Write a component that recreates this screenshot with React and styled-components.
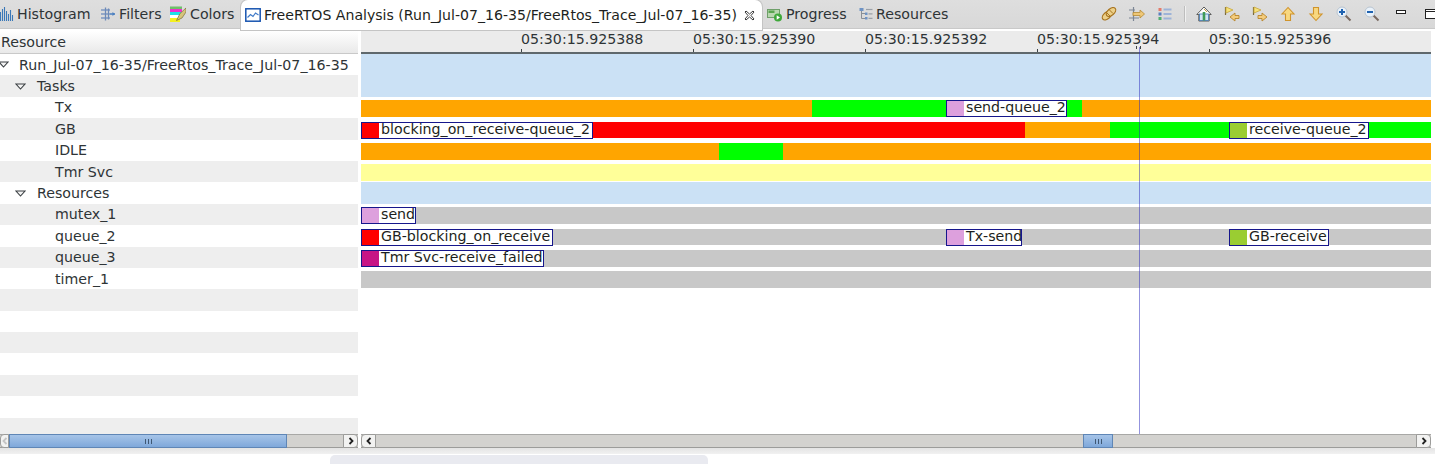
import React from 'react';
import styled, { createGlobalStyle } from 'styled-components';

const GlobalStyle = createGlobalStyle`
    html, body { margin: 0; padding: 0; background: #fff; }
    body { font-family: "DejaVu Sans", sans-serif; font-size: 14.2px; color: #2e3436; }
`;

const ROW_H = 21.4;
const ORANGE = '#ffa500';
const GREEN = '#00ff00';
const RED = '#ff0000';
const GRAY = '#c8c8c8';
const BLUE = '#cbe1f5';
const YELLOW = '#ffff99';
const PLUM = '#dda0dd';
const LIME = '#9acd32';
const VIOLET = '#c71585';

const tree = [
    { name: 'Run_Jul-07_16-35/FreeRtos_Trace_Jul-07_16-35', level: 0, open: true },
    { name: 'Tasks', level: 1, open: true },
    { name: 'Tx', level: 2 },
    { name: 'GB', level: 2 },
    { name: 'IDLE', level: 2 },
    { name: 'Tmr Svc', level: 2 },
    { name: 'Resources', level: 1, open: true },
    { name: 'mutex_1', level: 2 },
    { name: 'queue_2', level: 2 },
    { name: 'queue_3', level: 2 },
    { name: 'timer_1', level: 2 },
];

// each track is a list of [width, colour] states, or [width, colour, label] for a labelled event
const tracks = [
    { group: true, rows: 2 },
    { states: [[451, ORANGE], [134, GREEN], [121, PLUM, 'send-queue_2'], [15, GREEN], [349, ORANGE]] },
    { states: [[232, RED, 'blocking_on_receive-queue_2'], [432, RED], [85, ORANGE], [119, GREEN], [140, LIME, 'receive-queue_2'], [62, GREEN]] },
    { states: [[358, ORANGE], [64, GREEN], [648, ORANGE]] },
    { states: [[1070, YELLOW]] },
    { group: true, rows: 1 },
    { states: [[55, PLUM, 'send'], [1015, GRAY]] },
    { states: [[192, RED, 'GB-blocking_on_receive'], [393, GRAY], [76, PLUM, 'Tx-send'], [207, GRAY], [100, LIME, 'GB-receive'], [102, GRAY]] },
    { states: [[183, VIOLET, 'Tmr Svc-receive_failed'], [887, GRAY]] },
    { states: [[1070, GRAY]] },
];

const ticks = ['05:30:15.925388', '05:30:15.925390', '05:30:15.925392', '05:30:15.925394', '05:30:15.925396'];

const Page = styled.div`
    position: relative;
    width: 1435px;
    height: 464px;
    overflow: hidden;
    background: #fff;
`;

const TabBar = styled.div`
    display: flex;
    align-items: stretch;
    height: 29px;
    box-sizing: border-box;
    background: linear-gradient(#dedede, #d8d8d8);
    border-bottom: 1px solid #c9c9c9;
`;

const Tab = styled.div`
    display: flex;
    align-items: center;
    flex: 0 0 ${p => p.$w}px;
    box-sizing: border-box;
    padding-left: ${p => p.$pad}px;
    gap: ${p => p.$gap}px;
    height: ${p => (p.$active ? '30px' : '28px')};
    font-size: ${p => (p.$active ? '14.1px' : '14.2px')};
    white-space: nowrap;
    color: ${p => (p.$active ? '#1d1f20' : '#2e3436')};
    background: ${p => (p.$active ? '#fff' : 'transparent')};
    border-radius: ${p => (p.$active ? '7px 7px 0 0' : '0')};
    box-shadow: ${p => (p.$active ? '0 0 0 1px #c4c4c4' : 'none')};
    position: relative;
`;

const CloseSlot = styled.span`
    display: flex;
    margin-left: 4px;
`;

const Toolbar = styled.div`
    display: flex;
    align-items: center;
    margin-left: auto;
    margin-right: -11px;
    height: 28px;
`;

const ToolSlot = styled.div`
    display: flex;
    justify-content: center;
    align-items: center;
    width: 28px;
    height: 28px;
    margin-left: ${p => p.$push || 0}px;
`;

const ToolSep = styled.div`
    width: 1px;
    height: 16px;
    margin: 0 5px 0 5px;
    background: #bdbdbd;
    box-shadow: 1px 0 0 #f1f1f1;
`;

const Panes = styled.div`
    display: grid;
    grid-template-columns: 358px 1070px;
    column-gap: 3px;
    margin-top: 2px;
    height: 403px;
    overflow: hidden;
`;

const TreePane = styled.div`
    overflow: hidden;
`;

const TreeHeader = styled.div`
    display: flex;
    align-items: center;
    height: 23px;
    box-sizing: border-box;
    padding-left: 1px;
    background: linear-gradient(#ffffff, #e9e9e9);
    border-bottom: 1px solid #c9c9c9;
`;

const TreeRow = styled.div`
    display: flex;
    align-items: center;
    height: ${ROW_H}px;
    padding-left: ${p => [0, 15, 55][p.$level]}px;
    background: ${p => (p.$odd ? '#eeeeee' : '#ffffff')};
    white-space: nowrap;
`;

const Twisty = styled.svg`
    width: 11px;
    height: 7px;
    margin-right: ${p => (p.$root ? '10px' : '11px')};
    margin-left: ${p => (p.$root ? '-2px' : '0')};
`;

const ChartPane = styled.div`
    position: relative;
    overflow: hidden;
`;

const Ruler = styled.div`
    display: flex;
    height: 23px;
    box-sizing: border-box;
    padding-left: 160px;
    background: #ebebeb;
    border-bottom: 2px solid #5f686c;
`;

const Tick = styled.div`
    position: relative;
    flex: 0 0 172px;
    line-height: 17px;
    white-space: nowrap;

    &::after {
        content: '';
        position: absolute;
        left: 0;
        bottom: 0;
        width: 1px;
        height: 3px;
        background: #3d4447;
    }
`;

const Track = styled.div`
    display: flex;
    box-sizing: border-box;
    height: ${p => p.$rows * ROW_H}px;
    padding-top: ${p => (p.$group ? 0 : 3.5)}px;
`;

const GroupBand = styled.div`
    flex: 1;
    background: ${BLUE};
`;

const State = styled.div`
    flex: 0 0 ${p => p.$w}px;
    height: 16.5px;
    background: ${p => p.$c};
`;

const Event = styled.div`
    display: flex;
    flex: 0 0 ${p => p.$w}px;
    box-sizing: border-box;
    height: 17px;
    border: 1px solid #16168c;
    background: #fff;
    overflow: hidden;
`;

const Swatch = styled.div`
    flex: 0 0 17px;
    background: ${p => p.$c};
`;

const EventLabel = styled.span`
    padding-left: 2px;
    line-height: 13px;
    color: #1d1f20;
    white-space: nowrap;
`;

const Cursor = styled.div`
    position: absolute;
    left: 778px;
    top: 16px;
    bottom: 0;
    width: 1px;
    background: rgba(40, 40, 190, 0.5);
`;

const CursorMark = styled.div`
    position: absolute;
    left: 775px;
    top: 15px;
    width: 3px;
    height: 3px;
    border-left: 1px solid #3d4447;
    border-right: 1px solid #3d4447;
`;

const Scrollers = styled.div`
    display: grid;
    grid-template-columns: 358px 1070px;
    column-gap: 3px;
    height: 14px;
`;

const Scroller = styled.div`
    display: flex;
    box-sizing: border-box;
    height: 14px;
    background: #d3d2cf;
    border-top: 1px solid #a8a8a6;
    border-bottom: 1px solid #9c9c9a;
`;

const ScrollButton = styled.div`
    display: flex;
    align-items: center;
    justify-content: center;
    flex: 0 0 ${p => p.$w || 15}px;
    box-sizing: border-box;
    margin: -1px 0;
    background: #f2f2f1;
    border: 1px solid #9c9c9a;
    border-radius: ${p => (p.$left ? '4px 0 0 4px' : '0 4px 4px 0')};
`;

const Gutter = styled.div`
    flex: 0 0 ${p => p.$w}px;
`;

const Thumb = styled.div`
    display: flex;
    align-items: center;
    justify-content: center;
    gap: 2px;
    flex: 0 0 ${p => p.$w}px;
    box-sizing: border-box;
    margin: -1px 0;
    background: linear-gradient(#a6c4e8, #7fa8da);
    border: 1px solid #5f86b6;
`;

const Grip = styled.span`
    width: 1px;
    height: 5px;
    background: #3f5874;
`;

const BottomEdge = styled.div`
    height: 6px;
    background: linear-gradient(#e4e4e4, #f1f1f1);
`;

const BottomTab = styled.div`
    width: 378px;
    height: 12px;
    margin: 1px 0 0 330px;
    background: #e9eaf0;
    border-radius: 5px 5px 0 0;
`;

const Icon = ({ children, w = 16, h = 16 }) => (
    <svg width={w} height={h} viewBox={`0 0 ${w} ${h}`} style={{ flex: 'none', display: 'block' }}>
        {children}
    </svg>
);

const HistogramIcon = () => (
    <Icon w={14} h={14}>
        <path d="M0.500 5v9M2.500 2v12M4.500 0v14M6.500 4v10M8.500 7v7M10.500 3v11M12.500 8v6" stroke="#3a78b8" strokeWidth="1.100" fill="none" />
    </Icon>
);

const FiltersIcon = () => (
    <Icon>
        <path d="M1 4h9M1 8h9M1 12h9" stroke="#7d98c2" strokeWidth="1.300" />
        <path d="M5.500 1.500v13M8.500 2.500v11" stroke="#6d8ab8" strokeWidth="1.300" />
        <path d="M10 8h5" stroke="#4a7fc0" strokeWidth="1.500" />
        <path d="M12.500 6l2.500 2-2.500 2z" fill="#4a7fc0" />
    </Icon>
);

const ColorsIcon = () => (
    <Icon h={17}>
        <rect x="0" y="0.500" width="12" height="2.500" fill="#6fbf6a" />
        <rect x="0" y="3" width="12" height="3" fill="#f02fd0" />
        <rect x="0" y="6" width="12" height="3" fill="#20e0e8" />
        <rect x="0" y="9" width="12" height="3" fill="#ffffff" />
        <rect x="0" y="12" width="10" height="4" fill="#f4f020" />
        <path d="M16 2l-6 5.500-3.500 7 5.500-2.500 4-6z" fill="#d6c47a" stroke="#7d6d3a" strokeWidth="0.700" />
    </Icon>
);

const AnalysisIcon = () => (
    <Icon>
        <rect x="0.800" y="1.800" width="14.400" height="12.400" fill="#fff" stroke="#1854b0" strokeWidth="1.500" />
        <path d="M2.500 10.500l3-3 2.500 2 2.500-3.500 3 2" fill="none" stroke="#3f7ac8" strokeWidth="1.200" />
    </Icon>
);

const CloseIcon = () => (
    <Icon w={11} h={11}>
        <path d="M1 2l1-1 3.500 3 3.500-3 1 1-3 3.500 3 3.500-1 1-3.500-3-3.500 3-1-1 3-3.500z" fill="#fff" stroke="#3b3b3b" strokeWidth="1" />
    </Icon>
);

const ProgressIcon = () => (
    <Icon>
        <rect x="0.500" y="3.500" width="12" height="8" fill="#b9d7b0" stroke="#6f9f6a" />
        <rect x="1.500" y="4.500" width="6" height="2.500" fill="#5aa550" />
        <circle cx="11" cy="11.500" r="4" fill="#3ea83a" />
        <path d="M9.700 9.300l3.300 2.200-3.300 2.200z" fill="#fff" />
    </Icon>
);

const ResourcesIcon = () => (
    <Icon w={14} h={14}>
        <path d="M2.500 3v8.500H6M2.500 6.500H6" fill="none" stroke="#8a8f96" />
        <rect x="0.500" y="1" width="4" height="3" fill="#6f93c4" />
        <path d="M7 2.500h6.500" stroke="#9aa0a8" strokeWidth="1.200" />
        <rect x="6" y="5.500" width="2.500" height="2.500" fill="#6f93c4" />
        <rect x="6" y="10" width="2.500" height="2.500" fill="#6f93c4" />
        <path d="M9.500 6.800h4M9.500 11.300h4" stroke="#9aa0a8" strokeWidth="1.200" />
    </Icon>
);

const SyncIcon = () => (
    <Icon>
        <ellipse cx="6" cy="9.500" rx="5.500" ry="3.300" transform="rotate(-40 6 9.500)" fill="#ecd08a" stroke="#a8741e" strokeWidth="1.200" />
        <ellipse cx="10" cy="6" rx="5.500" ry="3.300" transform="rotate(-40 10 6)" fill="#ecd08a" stroke="#a8741e" strokeWidth="1.200" />
        <path d="M5 6l5 5M8 3.500l4 4" stroke="#a8741e" strokeWidth="1" />
    </Icon>
);

const AlignIcon = () => (
    <Icon>
        <path d="M4.500 1v14" stroke="#7c8694" strokeWidth="1.200" />
        <path d="M0 4h4M0 12h4M6 12h4" stroke="#7c8694" strokeWidth="1.200" />
        <path d="M4 2l2 2-2 2zM4 10l2 2-2 2z" fill="#7c8694" />
        <path d="M4 6.500h7V4l4.500 4L11 12V9.500H4z" fill="#eec777" stroke="#b58a34" strokeWidth="0.800" />
    </Icon>
);

const LegendIcon = () => (
    <Icon>
        <rect x="1.500" y="2" width="3" height="3" fill="#e47a6a" />
        <rect x="1.500" y="6.500" width="3" height="3" fill="#5a7fc0" />
        <rect x="1.500" y="11" width="3" height="3" fill="#4fae70" />
        <path d="M6.500 3.500h8M6.500 8h8M6.500 12.500h8" stroke="#9db3d8" strokeWidth="2" />
    </Icon>
);

const HomeIcon = () => (
    <Icon>
        <path d="M8 1L0.800 8.500h2V15h10.400V8.500h2z" fill="#fff" stroke="#5a5a58" strokeWidth="1" />
        <rect x="3.500" y="8" width="9" height="6.500" fill="#d2e4f4" stroke="#3f74b0" strokeWidth="0.800" />
        <rect x="6.700" y="6" width="2.600" height="8.500" fill="#3f9a58" />
        <path d="M8 3l3 3" stroke="#c9a04a" />
    </Icon>
);

const FlagArrowIcon = ({ right }) => (
    <Icon>
        <path d="M1.500 1v8" stroke="#7a6a3a" strokeWidth="1.200" />
        <path d="M2 1l7 3-7 3z" fill="#f6e27a" stroke="#c8a63a" strokeWidth="0.800" />
        {right
            ? <path d="M6 9.500h4V7l5 4-5 4v-2.500H6z" fill="#f4cc7c" stroke="#b8862c" strokeWidth="0.900" />
            : <path d="M15 9.500h-4V7l-5 4 5 4v-2.500h4z" fill="#f4cc7c" stroke="#b8862c" strokeWidth="0.900" />}
    </Icon>
);

const UpIcon = () => (
    <Icon>
        <path d="M8 1.500L2 8h3.500v6.500h5V8H14z" fill="#f8d880" stroke="#d0942c" strokeWidth="1.100" />
    </Icon>
);

const DownIcon = () => (
    <Icon>
        <path d="M8 14.500L2 8h3.500V1.500h5V8H14z" fill="#f8d880" stroke="#d0942c" strokeWidth="1.100" />
    </Icon>
);

const ZoomIcon = ({ plus }) => (
    <Icon>
        <path d="M9.500 9.500l5 5" stroke="#7a6a60" strokeWidth="2" />
        <circle cx="6" cy="6" r="5" fill="#eaf2fa" stroke="#b8c4d0" />
        <path d="M3 6h6" stroke="#1f62b0" strokeWidth="2" />
        {plus && <path d="M6 3v6" stroke="#1f62b0" strokeWidth="2" />}
    </Icon>
);

const MinIcon = () => (
    <Icon>
        <rect x="2.500" y="4.500" width="9" height="3" fill="#fff" stroke="#222" />
    </Icon>
);

const MaxIcon = () => (
    <Icon>
        <rect x="1.500" y="3.500" width="12" height="9" fill="#fff" stroke="#222" />
        <path d="M1.500 5.500h12" stroke="#222" />
    </Icon>
);

const TwistyIcon = ({ root }) => (
    <Twisty $root={root} viewBox="0 0 11 7">
        <path d="M1 1h9L5.500 6z" fill="#f4f4f4" stroke="#3a3f42" strokeWidth="1.100" />
    </Twisty>
);

const ScrollArrow = ({ left, color = '#222' }) => (
    <Icon w={6} h={8}>
        <path d={left ? 'M4.500 1L1.500 4l3 3' : 'M1.500 1l3 3-3 3'} fill="none" stroke={color} strokeWidth="1.800" />
    </Icon>
);

const Grips = () => (
    <>
        <Grip />
        <Grip />
        <Grip />
    </>
);

const TrackRow = ({ track }) => {
    if (track.group) {
        return (
            <Track $rows={track.rows} $group>
                <GroupBand />
            </Track>
        );
    }
    return (
        <Track $rows={1}>
            {track.states.map(([w, c, label], i) => (
                label
                    ? <Event key={i} $w={w}><Swatch $c={c} /><EventLabel>{label}</EventLabel></Event>
                    : <State key={i} $w={w} $c={c} />
            ))}
        </Track>
    );
};

export default function App() {
    const blanks = Array.from({ length: 8 }, (_, i) => i + tree.length);
    return (
        <Page>
            <GlobalStyle />
            <TabBar>
                <Tab $w={99} $pad={0} $gap={3}><HistogramIcon />Histogram</Tab>
                <Tab $w={70} $pad={1} $gap={3}><FiltersIcon />Filters</Tab>
                <Tab $w={72} $pad={1} $gap={4}><ColorsIcon />Colors</Tab>
                <Tab $active $w={521} $pad={4} $gap={3}>
                    <AnalysisIcon />
                    FreeRTOS Analysis (Run_Jul-07_16-35/FreeRtos_Trace_Jul-07_16-35)
                    <CloseSlot><CloseIcon /></CloseSlot>
                </Tab>
                <Tab $w={96} $pad={5} $gap={3}><ProgressIcon />Progress</Tab>
                <Tab $w={100} $pad={1} $gap={3}><ResourcesIcon />Resources</Tab>
                <Toolbar>
                    <ToolSlot><SyncIcon /></ToolSlot>
                    <ToolSlot><AlignIcon /></ToolSlot>
                    <ToolSlot><LegendIcon /></ToolSlot>
                    <ToolSep />
                    <ToolSlot><HomeIcon /></ToolSlot>
                    <ToolSlot><FlagArrowIcon /></ToolSlot>
                    <ToolSlot><FlagArrowIcon right /></ToolSlot>
                    <ToolSlot><UpIcon /></ToolSlot>
                    <ToolSlot><DownIcon /></ToolSlot>
                    <ToolSlot><ZoomIcon plus /></ToolSlot>
                    <ToolSlot><ZoomIcon /></ToolSlot>
                    <ToolSlot $push={2}><MinIcon /></ToolSlot>
                    <ToolSlot $push={2}><MaxIcon /></ToolSlot>
                </Toolbar>
            </TabBar>
            <Panes>
                <TreePane>
                    <TreeHeader>Resource</TreeHeader>
                    {tree.map((item, i) => (
                        <TreeRow key={item.name} $level={item.level} $odd={i % 2 === 1}>
                            {item.open && <TwistyIcon root={item.level === 0} />}
                            {item.name}
                        </TreeRow>
                    ))}
                    {blanks.map(i => <TreeRow key={i} $level={2} $odd={i % 2 === 1} />)}
                </TreePane>
                <ChartPane>
                    <Ruler>
                        {ticks.map(t => <Tick key={t}>{t}</Tick>)}
                    </Ruler>
                    {tracks.map((t, i) => <TrackRow key={i} track={t} />)}
                    <CursorMark />
                    <Cursor />
                </ChartPane>
            </Panes>
            <Scrollers>
                <Scroller>
                    <ScrollButton $left $w={9}><ScrollArrow left color="#c4c4c4" /></ScrollButton>
                    <Thumb $w={278}><Grips /></Thumb>
                    <Gutter $w={56} />
                    <ScrollButton $w={15}><ScrollArrow /></ScrollButton>
                </Scroller>
                <Scroller>
                    <ScrollButton $left><ScrollArrow left /></ScrollButton>
                    <Gutter $w={707} />
                    <Thumb $w={30}><Grips /></Thumb>
                    <Gutter $w={303} />
                    <ScrollButton><ScrollArrow /></ScrollButton>
                </Scroller>
            </Scrollers>
            <BottomEdge />
            <BottomTab />
        </Page>
    );
}
